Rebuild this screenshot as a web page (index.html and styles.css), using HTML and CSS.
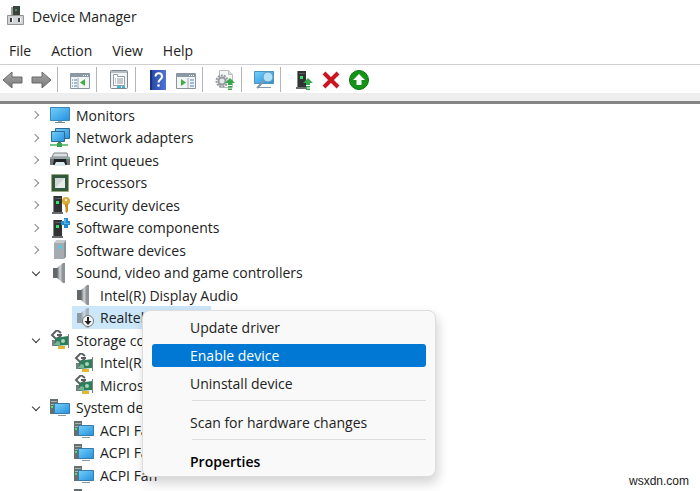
FILE: index.html
```
<!DOCTYPE html>
<html lang="en">
<head>
    <meta charset="UTF-8">
    <meta name="viewport" content="width=device-width, initial-scale=1.0">
    <title>Device Manager</title>
    <link rel="stylesheet" href="styles.css">
</head>
<body>
    <!-- icons -->
    <svg class="sprite" aria-hidden="true">
        <defs>
            <linearGradient id="blue" x1="0" y1="0" x2="1" y2="1">
                <stop offset="0" stop-color="#74d0fb"/>
                <stop offset="1" stop-color="#2590dc"/>
            </linearGradient>
            <linearGradient id="steel" x1="0" y1="0" x2="1" y2="0">
                <stop offset="0" stop-color="#5f6468"/>
                <stop offset=".5" stop-color="#d2d5d8"/>
                <stop offset="1" stop-color="#84888c"/>
            </linearGradient>
            <linearGradient id="arrow" x1="0" y1="0" x2="0" y2="1">
                <stop offset="0" stop-color="#a9a9a9"/>
                <stop offset="1" stop-color="#777"/>
            </linearGradient>
            <linearGradient id="help" x1="0" y1="0" x2="1" y2="0">
                <stop offset="0" stop-color="#2343a5"/>
                <stop offset="1" stop-color="#4e76d6"/>
            </linearGradient>
        </defs>
        <symbol id="i-up" viewBox="0 0 10 12">
            <path d="M5 0l5 5H7v2H3V5H0zM3 8h4v1.500H3zM3 10.500h4V12H3z" fill="#36a849"/>
        </symbol>
        <symbol id="i-monitor" viewBox="0 0 20 20">
            <path d="M.5 2.500h19v13H.5z" fill="url(#blue)" stroke="#3b87b8"/>
            <path d="M8 16h4v1H8z" fill="#9db0bb"/>
            <path d="M5 17h10v1H5z" fill="#6d8796"/>
        </symbol>
        <symbol id="i-network" viewBox="0 0 20 20">
            <path d="M5.500 .5h14v10h-14z" fill="url(#blue)" stroke="#2c6a93"/>
            <path d="M1.500 3.500h13v10h-13z" fill="url(#blue)" stroke="#2c6a93"/>
            <path d="M8 14h3v2H8z" fill="#3b8c4a"/>
            <path d="M0 16h18v2H0z" fill="#73c785"/>
            <path d="M7 15h5v4H7z" fill="#36a552"/>
        </symbol>
        <symbol id="i-printer" viewBox="0 0 20 20">
            <path d="M4 3h13l1 4H2z" fill="#dbe0e3" stroke="#7b8285"/>
            <path d="M0 7h20v8H0z" fill="#70777b"/>
            <path d="M0 7h20v2H0z" fill="#98a0a5"/>
            <path d="M4 9h12l1 6H3z" fill="#202426"/>
            <path d="M6 12h8l2 4H4z" fill="#dceaf1"/>
            <path d="M16 8h3v1h-3z" fill="#5fd07a"/>
        </symbol>
        <symbol id="i-cpu" viewBox="0 0 20 20">
            <path d="M1.500 1.500h17v17h-17z" fill="#31563d" stroke="#9da55f" stroke-dasharray="1 1"/>
            <path d="M2 2h16v16H2z" fill="#31583f"/>
            <path d="M5 5h10v10H5z" fill="#cfd5d3"/>
            <path d="M5 15L15 5v10z" fill="#e7ebea"/>
        </symbol>
        <symbol id="i-tower" viewBox="0 0 20 20">
            <path d="M4 1h8v17H4z" fill="#303233"/>
            <path d="M3 1h1v17H3z" fill="#85898a"/>
            <path d="M2 17h11v2H2z" fill="#696d6f"/>
            <path d="M6 6h3v3H6z" fill="#35e46b"/>
            <path d="M5 3h6v1H5z" fill="#5a5e60"/>
        </symbol>
        <symbol id="i-security" viewBox="0 0 20 20">
            <use href="#i-tower" width="20" height="20"/>
            <circle cx="16" cy="6" r="4" fill="#dda93d"/>
            <circle cx="16" cy="5" r="1.200" fill="#fff3c9"/>
            <path d="M15 9h3v7l-1.500 2-1.500-2 1-1-1-1 1-1-1-1z" fill="#c88d25"/>
        </symbol>
        <symbol id="i-component" viewBox="0 0 20 20">
            <use href="#i-tower" y="1" width="20" height="20"/>
            <path d="M11 3h3V0h4v3h2v4h-2v3h-4V7h-3z" fill="#2688cf"/>
            <path d="M14 1h2v4h3v1h-5z" fill="#54b5ed"/>
        </symbol>
        <symbol id="i-software" viewBox="0 0 20 20">
            <path d="M4 3l3-3h9v17l-2 2H4z" fill="#8b9297"/>
            <path d="M4 3h10v16H4z" fill="#a5abb0"/>
            <path d="M4 3l3-3h9l-2 3z" fill="#c6cacd"/>
            <circle cx="10" cy="7" r="2" fill="#55c9e0"/>
        </symbol>
        <symbol id="i-speaker" viewBox="0 0 20 20">
            <path d="M3 5h4v10H3z" fill="#63686b"/>
            <path d="M7 5l6-5v20l-6-5z" fill="url(#steel)"/>
            <path d="M13 0h2v20h-2z" fill="#8d9296"/>
        </symbol>
        <symbol id="i-disabled" viewBox="0 0 20 20">
            <g opacity=".6"><use href="#i-speaker" width="20" height="20"/></g>
            <circle cx="14" cy="13" r="5.500" fill="#f7f7f7" stroke="#777"/>
            <path d="M13 9h2v4h2.500L14 17l-3.500-4H13z" fill="#222"/>
        </symbol>
        <symbol id="i-storage" viewBox="0 0 20 20">
            <path d="M11 3L7 0 2 5l4 4 5-3M7 5h5" fill="none" stroke="#5d6062" stroke-width="2"/>
            <path d="M2 10h3v6H2z" fill="#777d80"/>
            <path d="M5 8l13-2v9l-13 1z" fill="#2f7e5b"/>
            <path d="M18 4h1v14h-1z" fill="#79807d"/>
            <path d="M4 15l3-4 3 1v3z" fill="#75b895"/>
            <circle cx="13" cy="11" r="2" fill="#a9d3bd"/>
            <path d="M8 16h7v3H8z" fill="#e4b531"/>
        </symbol>
        <symbol id="i-system" viewBox="0 0 20 20">
            <path d="M0 1h8v15H0z" fill="#63706f"/>
            <path d="M1 3h6v1H1zM1 6h6v1H1z" fill="#a8b3b1"/>
            <path d="M1 8h2v2H1z" fill="#47df75"/>
            <path d="M4.500 5.500h15v10h-15z" fill="url(#blue)" stroke="#397ba8"/>
            <path d="M8 17h8v1H8z" fill="#8799a2"/>
        </symbol>
        <symbol id="i-panel" viewBox="0 0 20 20">
            <path d="M.5 3.500h19v15H.5z" fill="#f2f4f5" stroke="#89949c"/>
            <path d="M1 4h18v3H1z" fill="#8b99a5"/>
            <path d="M13 5h1v1h-1zM15 5h1v1h-1zM17 5h1v1h-1z" fill="#fff"/>
            <path d="M8 8v10" stroke="#9da7ae"/>
            <path d="M2 10h1M4 10h3M2 13h1M4 13h3M2 16h1M4 16h3" stroke="#4a85b9"/>
            <path d="M15 9v7l-5-3.500z" fill="#43ab43"/>
        </symbol>
    </svg>

    <div class="window">
        <header class="titlebar">
            <svg class="icon" viewBox="0 0 20 20" aria-hidden="true">
                <path d="M7 0h7v10H7z" fill="#39443c"/>
                <path d="M5 1h2v9H5z" fill="#9a9d9c"/>
                <path d="M9 3h2v2H9z" fill="#548b60"/>
                <path d="M1.500 9.500h16v9h-16z" fill="#d4d5d6" stroke="#929496"/>
                <path d="M4 12h2v4H4zM12 12h2v4h-2z" fill="#3c3f41"/>
                <path d="M6 12h1v4H6zM14 12h1v4h-1z" fill="#fff"/>
            </svg>
            <h1>Device Manager</h1>
        </header>

        <nav class="menubar">
            <button>File</button>
            <button>Action</button>
            <button>View</button>
            <button>Help</button>
        </nav>

        <div class="toolbar">
            <button aria-label="Back">
                <svg class="icon" viewBox="0 0 20 20"><path d="M0 10l9-8v5h10v6H9v5z" fill="url(#arrow)" stroke="#686868"/></svg>
            </button>
            <button aria-label="Forward">
                <svg class="icon" viewBox="0 0 20 20"><path d="M20 10l-9-8v5H1v6h10v5z" fill="url(#arrow)" stroke="#686868"/></svg>
            </button>
            <span class="divider"></span>
            <button aria-label="Show console tree"><svg class="icon"><use href="#i-panel"/></svg></button>
            <span class="divider"></span>
            <button aria-label="Properties">
                <svg class="icon" viewBox="0 0 20 20">
                    <rect x="1.500" y=".5" width="17" height="18" rx="1" fill="#f3f4f4" stroke="#7d878d"/>
                    <path d="M2 1h16v2H2z" fill="#b4bdc3"/>
                    <path d="M4.500 6.500v-2h4v2h7v9h-11z" fill="#fff" stroke="#94a0a8"/>
                    <path d="M6 9h1M8 9h6M6 11h1M8 11h6M6 13h1M8 13h6" stroke="#8b979f"/>
                    <path d="M8 17h4M13 17h3" stroke="#3db3df" stroke-width="2"/>
                </svg>
            </button>
            <span class="divider"></span>
            <button aria-label="Help">
                <svg class="icon" viewBox="0 0 20 20">
                    <path d="M2 0h16v20H2z" fill="url(#help)"/>
                    <path d="M2 0h2v20H2z" fill="#1b3283"/>
                    <path d="M7.500 6.500C7.500 2 14 2 14 6.500c0 3-3.500 3-3.500 6" fill="none" stroke="#fff" stroke-width="2"/>
                    <circle cx="10.500" cy="15.500" r="1.300" fill="#fff"/>
                </svg>
            </button>
            <button aria-label="Show action pane">
                <svg class="icon" viewBox="0 0 20 20">
                    <path d="M.5 3.500h19v15H.5z" fill="#f2f4f5" stroke="#89949c"/>
                    <path d="M1 4h18v3H1z" fill="#8b99a5"/>
                    <path d="M13 5h1v1h-1zM15 5h1v1h-1zM17 5h1v1h-1z" fill="#fff"/>
                    <path d="M12 8v10" stroke="#9da7ae"/>
                    <path d="M14 10h4M14 13h4M14 16h4" stroke="#4a85b9"/>
                    <path d="M5 9v7l5-3.500z" fill="#43ab43"/>
                </svg>
            </button>
            <span class="divider"></span>
            <button aria-label="Update device driver">
                <svg class="icon" viewBox="0 0 20 20">
                    <path d="M4.500 .5h9l4 4v13h-13z" fill="#f4f5f5" stroke="#b9bdc0"/>
                    <path d="M13.500 .5v4h4" fill="#dcdfe0" stroke="#b9bdc0"/>
                    <circle cx="7" cy="11" r="5.500" fill="none" stroke="#969b9f" stroke-width="2" stroke-dasharray="2 1"/>
                    <circle cx="7" cy="11" r="3.500" fill="#e6e8e9" stroke="#969b9f" stroke-width="2"/>
                    <use href="#i-up" x="10" y="8" width="10" height="12"/>
                </svg>
            </button>
            <span class="divider"></span>
            <button aria-label="Scan for hardware changes">
                <svg class="icon" viewBox="0 0 20 20">
                    <path d="M.5 1.500h19v12H.5z" fill="url(#blue)" stroke="#4d91bd"/>
                    <path d="M4 17h13v1H4z" fill="#819aa9"/>
                    <circle cx="14" cy="7" r="5" fill="#b1e1fa" stroke="#6697b4"/>
                    <path d="M10 11l-7 7" stroke="#8496a2" stroke-width="2"/>
                </svg>
            </button>
            <span class="divider"></span>
            <button aria-label="Enable device">
                <svg class="icon" viewBox="0 0 20 20">
                    <use href="#i-tower" x="1" width="20" height="20"/>
                    <use href="#i-up" x="10" y="8" width="10" height="12"/>
                </svg>
            </button>
            <button aria-label="Uninstall device">
                <svg class="icon" viewBox="0 0 20 20"><path d="M3 3l14 14M17 3L3 17" stroke="#c91622" stroke-width="4"/></svg>
            </button>
            <button aria-label="Add drivers">
                <svg class="icon" viewBox="0 0 20 20">
                    <circle cx="10" cy="10" r="9.500" fill="#149316" stroke="#0c720e"/>
                    <path d="M10 4l6 6h-3.500v5h-5v-5H4z" fill="#fff"/>
                </svg>
            </button>
        </div>

        <main class="content">
            <ul class="tree">
                <li><span class="chevron"></span><span class="node"><svg class="icon"><use href="#i-monitor"/></svg>Monitors</span></li>
                <li><span class="chevron"></span><span class="node"><svg class="icon"><use href="#i-network"/></svg>Network adapters</span></li>
                <li><span class="chevron"></span><span class="node"><svg class="icon"><use href="#i-printer"/></svg>Print queues</span></li>
                <li><span class="chevron"></span><span class="node"><svg class="icon"><use href="#i-cpu"/></svg>Processors</span></li>
                <li><span class="chevron"></span><span class="node"><svg class="icon"><use href="#i-security"/></svg>Security devices</span></li>
                <li><span class="chevron"></span><span class="node"><svg class="icon"><use href="#i-component"/></svg>Software components</span></li>
                <li><span class="chevron"></span><span class="node"><svg class="icon"><use href="#i-software"/></svg>Software devices</span></li>
                <li><span class="chevron open"></span><span class="node"><svg class="icon"><use href="#i-speaker"/></svg>Sound, video and game controllers</span></li>
                <li class="child"><span class="node"><svg class="icon"><use href="#i-speaker"/></svg>Intel(R) Display Audio</span></li>
                <li class="child"><span class="node selected"><svg class="icon"><use href="#i-disabled"/></svg>Realtek(R) Audio</span></li>
                <li><span class="chevron open"></span><span class="node"><svg class="icon"><use href="#i-storage"/></svg>Storage controllers</span></li>
                <li class="child"><span class="node"><svg class="icon"><use href="#i-storage"/></svg>Intel(R)</span></li>
                <li class="child"><span class="node"><svg class="icon"><use href="#i-storage"/></svg>Microsoft</span></li>
                <li><span class="chevron open"></span><span class="node"><svg class="icon"><use href="#i-system"/></svg>System devices</span></li>
                <li class="child"><span class="node"><svg class="icon"><use href="#i-system"/></svg>ACPI Fan</span></li>
                <li class="child"><span class="node"><svg class="icon"><use href="#i-system"/></svg>ACPI Fan</span></li>
                <li class="child"><span class="node"><svg class="icon"><use href="#i-system"/></svg>ACPI Fan</span></li>
                <li class="child"><span class="node"><svg class="icon"><use href="#i-system"/></svg></span></li>
            </ul>

            <div class="context-menu">
                <button>Update driver</button>
                <button class="active">Enable device</button>
                <button>Uninstall device</button>
                <hr>
                <button>Scan for hardware changes</button>
                <hr>
                <button class="default">Properties</button>
            </div>
        </main>
        <span class="watermark">wsxdn.com</span>
    </div>
</body>
</html>
```
FILE: styles.css
```
* {
    box-sizing: border-box;
}
body {
    margin: 0;
    font-family: "Open Sans", "Noto Sans", sans-serif;
    font-size: 14px;
    color: #222;
    background: #fff;
}
button {
    border: none;
    background: none;
    padding: 0;
    font: inherit;
    color: inherit;
}
.sprite {
    position: absolute;
    width: 0;
    height: 0;
}
.icon {
    display: block;
    flex: none;
    width: 20px;
    height: 20px;
}
.window {
    position: relative;
    display: flex;
    flex-direction: column;
    height: 100vh;
    overflow: hidden;
}

/* title + menus */
.titlebar {
    display: flex;
    flex: none;
    align-items: center;
    gap: 6px;
    height: 32px;
    padding-left: 6px;
}
.titlebar h1 {
    margin: 0;
    font-size: 14px;
    font-weight: normal;
}
.menubar {
    display: flex;
    flex: none;
    gap: 20px;
    height: 33px;
    padding: 4px 0 0 9px;
    border-bottom: 1px solid #cfcfcf;
}

/* toolbar */
.toolbar {
    display: flex;
    flex: none;
    align-items: center;
    gap: 8px;
    height: 39px;
    padding: 0 3px 7px;
    border-bottom: 3px solid #858585;
    background: linear-gradient(to top, #eee 8px, #fff 8px);
}
.divider {
    width: 1px;
    height: 25px;
    margin: 0 4px 0 -2px;
    background: #b5b5b5;
}

/* device tree */
.content {
    position: relative;
    flex: 1;
}
.tree {
    list-style: none;
    margin: 0;
    padding: 0 0 0 32px;
}
.tree li {
    display: flex;
    align-items: center;
    gap: 8px;
    height: 22px;
}
.tree li:nth-child(even) {
    height: 23px;
}
.tree .child {
    padding-left: 40px;
}
.node {
    display: flex;
    align-items: center;
    gap: 6px;
    height: 100%;
    padding: 0 4px 0 2px;
    white-space: nowrap;
}
.node.selected {
    min-width: 139px;
    background: #cce6fa;
}
.chevron {
    display: flex;
    width: 8px;
}
.chevron::before {
    content: "";
    width: 5px;
    height: 5px;
    border: solid #8a8a8a;
    border-width: 1px 1px 0 0;
    transform: rotate(45deg);
}
.chevron.open {
    justify-content: center;
    padding-bottom: 2px;
}
.chevron.open::before {
    border-color: #333;
    transform: rotate(135deg);
}

/* right-click menu */
.context-menu {
    position: absolute;
    top: 206px;
    left: 142px;
    display: flex;
    flex-direction: column;
    gap: 5px;
    width: 294px;
    padding: 5px 9px 3px;
    border: 1px solid #ddd;
    border-radius: 8px;
    background: #f9f9f9;
    box-shadow: 2px 6px 12px rgba(0, 0, 0, 0.18);
}
.context-menu button {
    height: 23px;
    padding: 0 0 1px 38px;
    border-radius: 3px;
    text-align: left;
}
.context-menu .active {
    background: #0078d4;
    color: #fff;
}
.context-menu .default {
    font-weight: 600;
    color: #000;
}
.context-menu hr {
    width: 234px;
    height: 1px;
    margin: 0 0 5px 40px;
    border: none;
    background: #ddd;
}
.watermark {
    position: absolute;
    right: 11px;
    bottom: 3px;
    font-family: "Liberation Sans", Arial, sans-serif;
    font-size: 12px;
    color: #222;
}
```
